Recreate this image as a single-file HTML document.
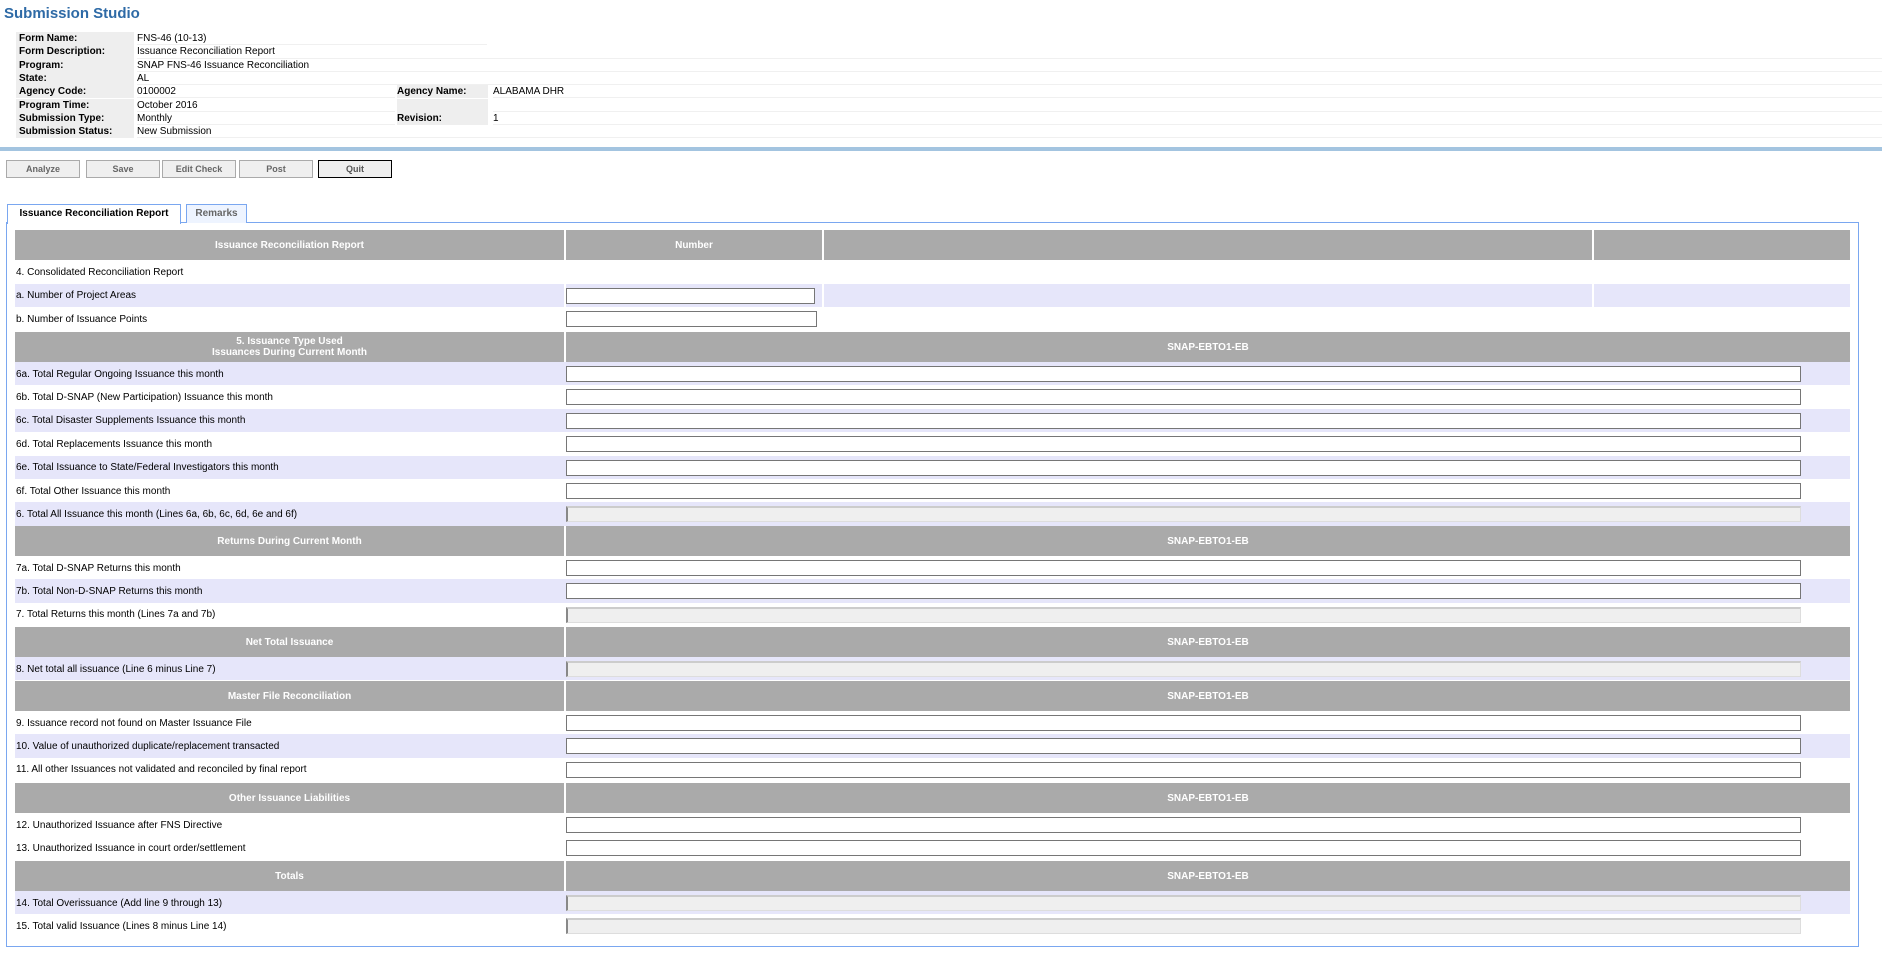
<!DOCTYPE html>
<html><head><meta charset="utf-8"><style>
*{box-sizing:border-box;margin:0;padding:0}
body{width:1882px;height:956px;background:#fff;font-family:"Liberation Sans",Tahoma,sans-serif;position:relative;overflow:hidden;color:#000}
.t{position:absolute;left:4px;top:5px;font-size:15px;font-weight:bold;color:#2e6aa6}
.ir{position:absolute;height:13.3px;font-size:10px;line-height:13px;white-space:nowrap}
.lb{background:#eee;font-weight:bold;padding-left:0px}
.vl{padding-left:0px;border-bottom:1px solid #f0f0f0}
.bar{position:absolute;left:0;top:147px;width:1882px;height:4px;background:#a3c4e0}
.btn{position:absolute;top:160px;height:18px;width:74px;background:#efefef;border:1px solid #aaa;font-size:9px;font-weight:bold;color:#666;text-align:center;line-height:16px}
.tab{position:absolute;top:204px;height:19px;font-size:10px;font-weight:bold;line-height:18px;text-align:center;border:1px solid #7aa7f0;border-bottom:none;white-space:nowrap}
.box{position:absolute;left:6px;top:222px;width:1853px;height:725px;border:1px solid #7aa7f0}
.r{position:absolute;left:15px;width:1835px;font-size:10px}
.c{position:absolute;top:0;bottom:0}
.h{background:#aaa;color:#fff;font-weight:bold;text-align:center;display:flex;align-items:center;justify-content:center;line-height:11px}
.lav{background:#e6e6fa}
.lt{position:absolute;left:1px;top:1px;bottom:0;display:flex;align-items:center}
.in{position:absolute;top:4px;height:16px;border:1px solid #767676;background:#fff}
.dis{background:#efefef;border-color:#ccc #ddd #ddd #888;border-width:2px 1px 1px 2px}
</style></head><body>
<div class="t">Submission Studio</div>

<div class="ir lb" style="left:16px;top:32px;width:118px;padding-left:3px">Form Name:</div><div class="ir vl" style="left:137px;top:32px;width:350px">FNS-46 (10-13)</div>
<div class="ir lb" style="left:16px;top:45.3px;width:118px;padding-left:3px">Form Description:</div><div class="ir vl" style="left:137px;top:45.3px;width:1745px">Issuance Reconciliation Report</div>
<div class="ir lb" style="left:16px;top:58.6px;width:118px;padding-left:3px">Program:</div><div class="ir vl" style="left:137px;top:58.6px;width:1745px">SNAP FNS-46 Issuance Reconciliation</div>
<div class="ir lb" style="left:16px;top:71.9px;width:118px;padding-left:3px">State:</div><div class="ir vl" style="left:137px;top:71.9px;width:1745px">AL</div>
<div class="ir lb" style="left:16px;top:85.2px;width:118px;padding-left:3px">Agency Code:</div><div class="ir vl" style="left:137px;top:85.2px;width:258px">0100002</div>
<div class="ir lb" style="left:397px;top:85.2px;width:91px">Agency Name:</div><div class="ir vl" style="left:493px;top:85.2px;width:1389px">ALABAMA DHR</div>
<div class="ir lb" style="left:16px;top:98.5px;width:118px;padding-left:3px">Program Time:</div><div class="ir vl" style="left:137px;top:98.5px;width:258px">October 2016</div>
<div class="ir lb" style="left:397px;top:98.5px;width:91px"></div><div class="ir vl" style="left:493px;top:98.5px;width:1389px"></div>
<div class="ir lb" style="left:16px;top:111.8px;width:118px;padding-left:3px">Submission Type:</div><div class="ir vl" style="left:137px;top:111.8px;width:258px">Monthly</div>
<div class="ir lb" style="left:397px;top:111.8px;width:91px">Revision:</div><div class="ir vl" style="left:493px;top:111.8px;width:1389px">1</div>
<div class="ir lb" style="left:16px;top:125.1px;width:118px;padding-left:3px">Submission Status:</div><div class="ir vl" style="left:137px;top:125.1px;width:1745px">New Submission</div>

<div class="bar"></div>
<div class="btn" style="left:6px">Analyze</div>
<div class="btn" style="left:86px">Save</div>
<div class="btn" style="left:162px">Edit Check</div>
<div class="btn" style="left:239px">Post</div>
<div class="btn" style="left:318px;border:1px solid #000;color:#555">Quit</div>

<div class="box"></div>
<div class="tab" style="left:7px;width:174px;background:#fff;height:20px;z-index:2">Issuance Reconciliation Report</div>
<div class="tab" style="left:186px;width:61px;background:#eef4ff;color:#666">Remarks</div>

<div class="r" style="top:230px;height:30px">
 <div class="c h" style="left:0;width:549px">Issuance Reconciliation Report</div>
 <div class="c h" style="left:551px;width:256px">Number</div>
 <div class="c h" style="left:809px;width:768px"></div>
 <div class="c h" style="left:1579px;width:256px"></div>
</div>
<div class="r" style="top:260px;height:23.6px"><div class="lt">4. Consolidated Reconciliation Report</div></div>
<div class="r" style="top:283.6px;height:23.6px">
 <div class="c lav" style="left:0;width:549px"></div><div class="c lav" style="left:551px;width:256px"></div><div class="c lav" style="left:809px;width:768px"></div><div class="c lav" style="left:1579px;width:256px"></div>
 <div class="lt">a. Number of Project Areas</div><div class="in" style="left:551px;width:249px"></div></div>
<div class="r" style="top:307.2px;height:23.6px"><div class="lt">b. Number of Issuance Points</div><div class="in" style="left:551px;width:251px"></div></div>

<div class="r" style="top:332px;height:30px">
 <div class="c h" style="left:0;width:549px">5. Issuance Type Used<br>Issuances During Current Month</div>
 <div class="c h" style="left:551px;width:1284px">SNAP-EBTO1-EB</div></div>
<div class="r lav" style="top:362px;height:23.4px"><div class="lt">6a. Total Regular Ongoing Issuance this month</div><div class="in" style="left:551px;width:1235px"></div></div>
<div class="r" style="top:385.4px;height:23.4px"><div class="lt">6b. Total D-SNAP (New Participation) Issuance this month</div><div class="in" style="left:551px;width:1235px"></div></div>
<div class="r lav" style="top:408.8px;height:23.4px"><div class="lt">6c. Total Disaster Supplements Issuance this month</div><div class="in" style="left:551px;width:1235px"></div></div>
<div class="r" style="top:432.2px;height:23.4px"><div class="lt">6d. Total Replacements Issuance this month</div><div class="in" style="left:551px;width:1235px"></div></div>
<div class="r lav" style="top:455.6px;height:23.4px"><div class="lt">6e. Total Issuance to State/Federal Investigators this month</div><div class="in" style="left:551px;width:1235px"></div></div>
<div class="r" style="top:479px;height:23.4px"><div class="lt">6f. Total Other Issuance this month</div><div class="in" style="left:551px;width:1235px"></div></div>
<div class="r lav" style="top:502.4px;height:23.6px"><div class="lt">6. Total All Issuance this month (Lines 6a, 6b, 6c, 6d, 6e and 6f)</div><div class="in dis" style="left:551px;width:1235px"></div></div>

<div class="r" style="top:526px;height:30px"><div class="c h" style="left:0;width:549px">Returns During Current Month</div><div class="c h" style="left:551px;width:1284px">SNAP-EBTO1-EB</div></div>
<div class="r" style="top:556px;height:23.4px"><div class="lt">7a. Total D-SNAP Returns this month</div><div class="in" style="left:551px;width:1235px"></div></div>
<div class="r lav" style="top:579.4px;height:23.4px"><div class="lt">7b. Total Non-D-SNAP Returns this month</div><div class="in" style="left:551px;width:1235px"></div></div>
<div class="r" style="top:602.8px;height:23.4px"><div class="lt">7. Total Returns this month (Lines 7a and 7b)</div><div class="in dis" style="left:551px;width:1235px"></div></div>

<div class="r" style="top:627px;height:30px"><div class="c h" style="left:0;width:549px">Net Total Issuance</div><div class="c h" style="left:551px;width:1284px">SNAP-EBTO1-EB</div></div>
<div class="r lav" style="top:657px;height:23.4px"><div class="lt">8. Net total all issuance (Line 6 minus Line 7)</div><div class="in dis" style="left:551px;width:1235px"></div></div>

<div class="r" style="top:681px;height:30px"><div class="c h" style="left:0;width:549px">Master File Reconciliation</div><div class="c h" style="left:551px;width:1284px">SNAP-EBTO1-EB</div></div>
<div class="r" style="top:711px;height:23.4px"><div class="lt">9. Issuance record not found on Master Issuance File</div><div class="in" style="left:551px;width:1235px"></div></div>
<div class="r lav" style="top:734.4px;height:23.4px"><div class="lt">10. Value of unauthorized duplicate/replacement transacted</div><div class="in" style="left:551px;width:1235px"></div></div>
<div class="r" style="top:757.8px;height:23.4px"><div class="lt">11. All other Issuances not validated and reconciled by final report</div><div class="in" style="left:551px;width:1235px"></div></div>

<div class="r" style="top:783px;height:30px"><div class="c h" style="left:0;width:549px">Other Issuance Liabilities</div><div class="c h" style="left:551px;width:1284px">SNAP-EBTO1-EB</div></div>
<div class="r" style="top:813px;height:23.4px"><div class="lt">12. Unauthorized Issuance after FNS Directive</div><div class="in" style="left:551px;width:1235px"></div></div>
<div class="r" style="top:836.4px;height:23.4px"><div class="lt">13. Unauthorized Issuance in court order/settlement</div><div class="in" style="left:551px;width:1235px"></div></div>

<div class="r" style="top:861px;height:30px"><div class="c h" style="left:0;width:549px">Totals</div><div class="c h" style="left:551px;width:1284px">SNAP-EBTO1-EB</div></div>
<div class="r lav" style="top:891px;height:23.4px"><div class="lt">14. Total Overissuance (Add line 9 through 13)</div><div class="in dis" style="left:551px;width:1235px"></div></div>
<div class="r" style="top:914.4px;height:23.4px"><div class="lt">15. Total valid Issuance (Lines 8 minus Line 14)</div><div class="in dis" style="left:551px;width:1235px"></div></div>
</body></html>
